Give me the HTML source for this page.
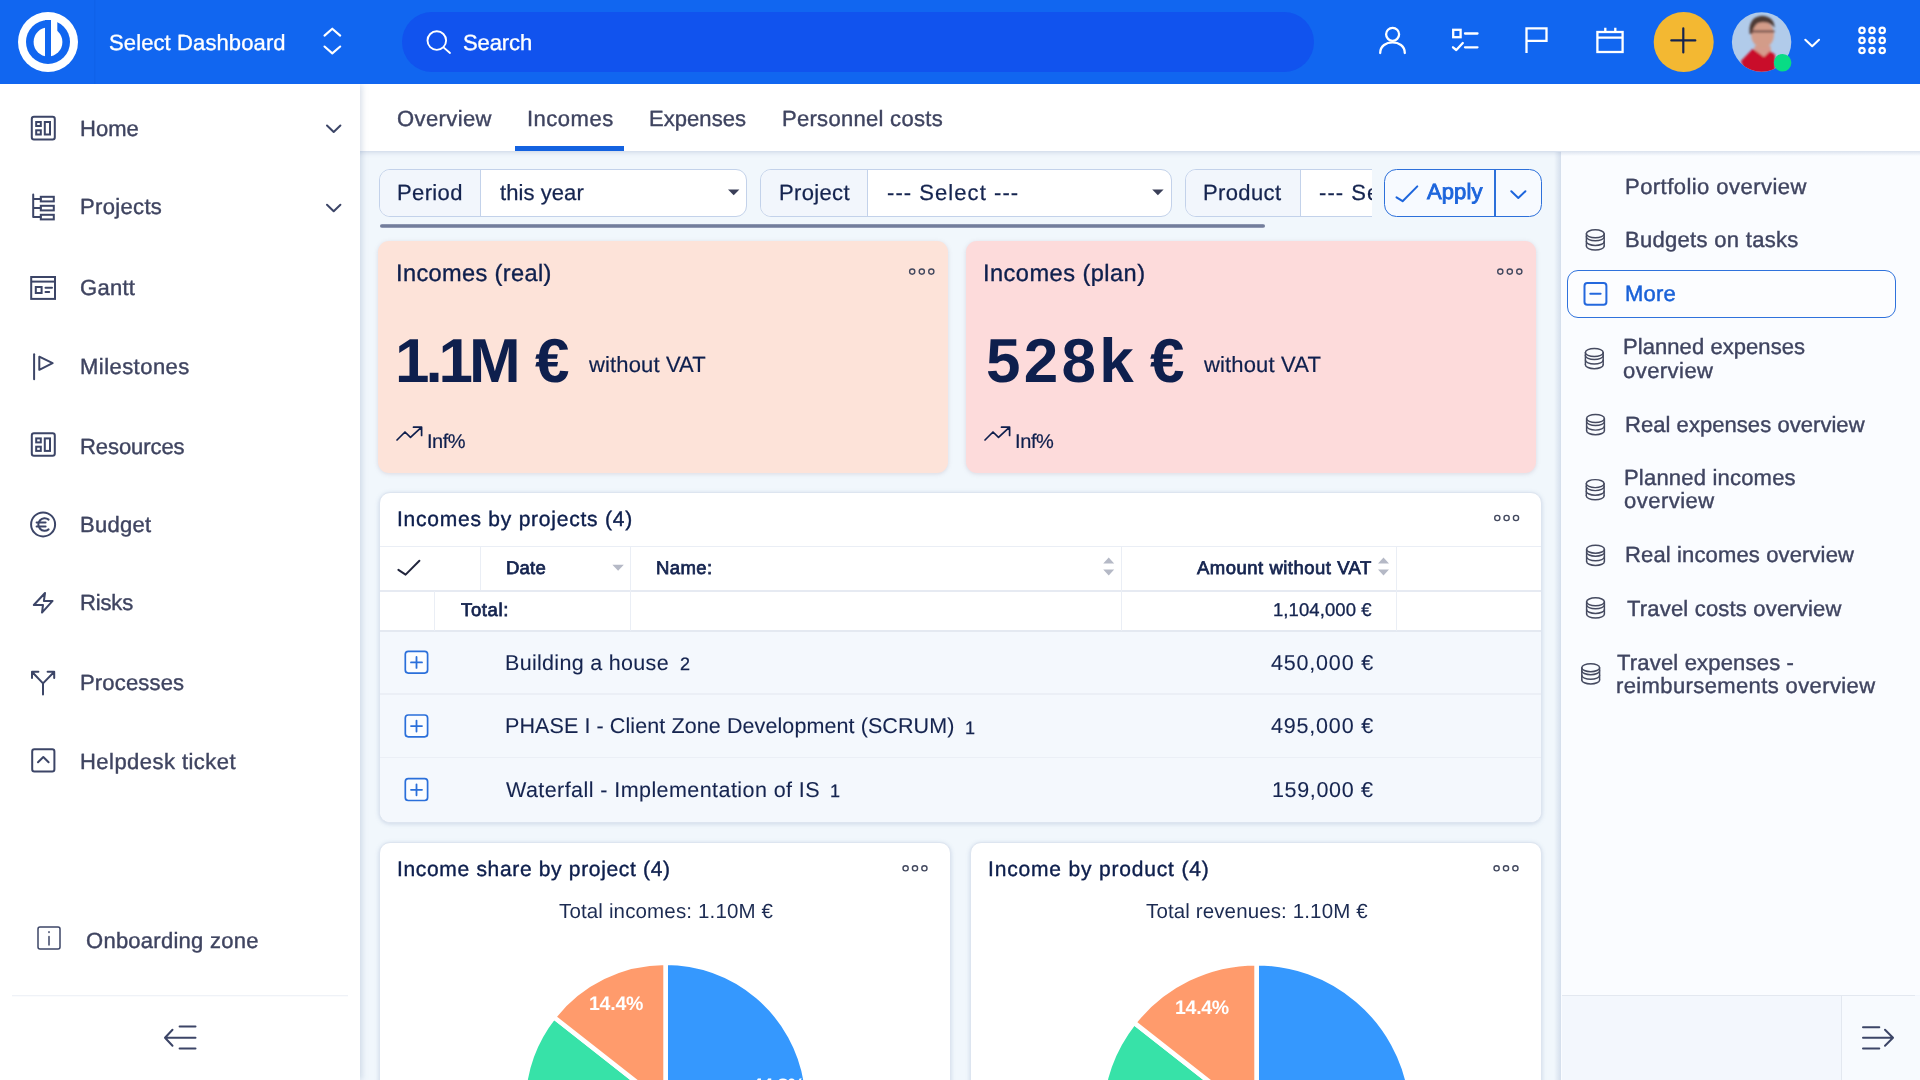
<!DOCTYPE html>
<html>
<head>
<meta charset="utf-8">
<title>Budget dashboard</title>
<style>
*{box-sizing:border-box;margin:0;padding:0}
html,body{width:1920px;height:1080px;overflow:hidden;background:#f1f7fc;font-family:"Liberation Sans",sans-serif;color:#3c4567}
.t{position:absolute;white-space:nowrap;line-height:1;text-rendering:geometricPrecision;will-change:transform}
.b{position:absolute}
#hdr{position:absolute;left:0;top:0;width:1920px;height:84px;background:#1166f0}
#search{position:absolute;left:402px;top:12px;width:912px;height:60px;border-radius:30px;background:#1153ee}
#side{position:absolute;left:0;top:84px;width:359.5px;height:996px;background:#fff;box-shadow:2px 0 6px rgba(110,135,175,.26)}
#tabs{position:absolute;left:355px;top:84px;width:1565px;height:66.8px;background:#fff;box-shadow:0 1px 5px rgba(110,135,180,.32)}
#rpanel{position:absolute;left:1561px;top:151px;width:359px;height:929px;background:#fafcff}
#rpsh{position:absolute;left:1554px;top:152px;width:7px;height:928px;background:linear-gradient(90deg,rgba(110,135,180,0),rgba(110,135,180,.22))}
.wcard{position:absolute;border-radius:11px;background:#fff;border:1px solid #dde5f0;box-shadow:0 1px 4px rgba(110,135,180,.28);overflow:hidden}
.fgrp{position:absolute;top:169.3px;height:47.3px;border:1px solid #c3d2ea;border-radius:11px;background:#fff;overflow:hidden}
.flab{position:absolute;left:0;top:0;height:45.3px;background:#f2f6fc;border-right:1px solid #c3d2ea}
svg{position:absolute;overflow:visible}
</style>
</head>
<body>
<div id="tabs"></div>
<div class="b" style="left:514.8px;top:146.2px;width:109.2px;height:4.8px;background:#1462e0"></div>
<!-- filters -->
<div class="fgrp" style="left:378.5px;width:368.5px"><div class="flab" style="width:101px"></div></div>
<div class="fgrp" style="left:760px;width:412px"><div class="flab" style="width:106.5px"></div></div>
<div class="b" style="left:1184.5px;top:169.3px;width:187.5px;height:47.3px;overflow:hidden"><div class="fgrp" style="left:0;top:0;width:300px"><div class="flab" style="width:115.5px"></div></div></div>
<div class="b" style="left:1383.5px;top:169.3px;width:158px;height:47.4px;border:1.8px solid #2d70da;border-radius:12.5px;background:#f7faff"></div>
<div class="b" style="left:1494px;top:170px;width:2.2px;height:46px;background:#2d70da"></div>
<div class="b" style="left:379.5px;top:224px;width:885px;height:4.2px;border-radius:2px;background:linear-gradient(180deg,#97a0ba,#6c7795 45%,#707b99 60%,#a0a8c0)"></div>
<svg style="left:0;top:0" width="1920" height="260" viewBox="0 0 1920 260">
 <path d="M728 189.6 H739.4 L733.7 195.2 Z" fill="#3a3f58"/>
 <path d="M1152.2 189.6 H1163.6 L1157.9 195.2 Z" fill="#3a3f58"/>
 <g fill="none" stroke="#1d65dc" stroke-width="2" stroke-linecap="round" stroke-linejoin="round">
  <path d="M1396.5 197.3 L1402.6 201.2 L1417.3 186.4"/>
  <path d="M1511.3 191.3 L1518.3 197.9 L1525.4 191.3"/>
 </g>
</svg>
<!-- KPI cards -->
<div class="b" style="left:378.3px;top:240.7px;width:570px;height:232.8px;border-radius:11px;background:#fde3d9;box-shadow:0 1px 4px rgba(150,130,150,.25)"></div>
<div class="b" style="left:965.9px;top:240.7px;width:570.3px;height:232.8px;border-radius:11px;background:#fddbdb;box-shadow:0 1px 4px rgba(150,130,150,.25)"></div>
<svg style="left:0;top:230px" width="1920" height="260" viewBox="0 230 1920 260">
 <g fill="none" stroke="#43495f" stroke-width="1.4">
  <circle cx="912.2" cy="271.6" r="2.6"/><circle cx="921.8" cy="271.6" r="2.6"/><circle cx="931.3" cy="271.6" r="2.6"/>
  <circle cx="1500.3" cy="271.6" r="2.6"/><circle cx="1509.8" cy="271.6" r="2.6"/><circle cx="1519.3" cy="271.6" r="2.6"/>
 </g>
 <g fill="none" stroke="#0e1f4d" stroke-width="1.7" stroke-linecap="round" stroke-linejoin="round">
  <path d="M397 440 L405 432 L410.5 437.3 L421 427.6 M413.5 427.2 H421.6 V435.4"/>
  <path d="M985 440 L993 432 L998.5 437.3 L1009 427.6 M1001.5 427.2 H1009.6 V435.4"/>
 </g>
</svg>
<div class="wcard" style="left:378.8px;top:492.3px;width:1163px;height:330.4px">
 <div class="b" style="left:0;top:138px;width:1163px;height:192px;background:#f4f8fd"></div>
 <div class="b" style="left:0;top:52.5px;width:1163px;height:1.2px;background:#eaeef5"></div>
 <div class="b" style="left:0;top:96.6px;width:1163px;height:2px;background:#e6eaf2"></div>
 <div class="b" style="left:0;top:137.2px;width:1163px;height:1.3px;background:#e4e9f1"></div>
 <div class="b" style="left:0;top:200.2px;width:1163px;height:1.2px;background:#ebeff6"></div>
 <div class="b" style="left:0;top:264px;width:1163px;height:1.2px;background:#ebeff6"></div>
 <div class="b" style="left:100.2px;top:53px;width:1.2px;height:44px;background:#eaeef5"></div>
 <div class="b" style="left:250.2px;top:53px;width:1.2px;height:85px;background:#eaeef5"></div>
 <div class="b" style="left:741.5px;top:53px;width:1.2px;height:85px;background:#eaeef5"></div>
 <div class="b" style="left:1016px;top:53px;width:1.2px;height:85px;background:#eaeef5"></div>
 <div class="b" style="left:54.4px;top:98px;width:1.2px;height:40px;background:#eaeef5"></div>
</div>
<svg style="left:0;top:490px" width="1920" height="340" viewBox="0 490 1920 340">
 <g fill="none" stroke="#43495f" stroke-width="1.4">
  <circle cx="1497.3" cy="518" r="2.6"/><circle cx="1506.6" cy="518" r="2.6"/><circle cx="1516" cy="518" r="2.6"/>
 </g>
 <path d="M398.4 569.8 L405.6 574.6 L419.4 560.8" fill="none" stroke="#22263d" stroke-width="2" stroke-linecap="round" stroke-linejoin="round"/>
 <g fill="#b5b9c6">
  <path d="M612.4 564.8 H623.8 L618.1 570.8 Z"/>
  <path d="M1103.2 563.4 H1114.2 L1108.7 557.4 Z M1103.2 569.4 H1114.2 L1108.7 575.6 Z"/>
  <path d="M1378 563.4 H1389 L1383.5 557.4 Z M1378 569.4 H1389 L1383.5 575.6 Z"/>
 </g>
 <g fill="#fbfdff" stroke="#2a6fda" stroke-width="1.7">
  <rect x="405.3" y="651.3" width="22.3" height="21.8" rx="3"/>
  <rect x="405.3" y="715" width="22.3" height="21.8" rx="3"/>
  <rect x="405.3" y="778.7" width="22.3" height="21.8" rx="3"/>
 </g>
 <g fill="none" stroke="#2a6fda" stroke-width="1.8" stroke-linecap="round">
  <path d="M411 662.4 H422 M416.5 656.9 V667.9"/>
  <path d="M411 726.1 H422 M416.5 720.6 V731.6"/>
  <path d="M411 789.8 H422 M416.5 784.3 V795.3"/>
 </g>
</svg>
<div class="wcard" style="left:378.8px;top:841.8px;width:572.5px;height:260px"></div>
<div class="wcard" style="left:970.3px;top:841.8px;width:571.5px;height:260px"></div>
<svg style="left:0;top:840px" width="1920" height="240" viewBox="0 840 1920 240">
 <g fill="none" stroke="#43495f" stroke-width="1.4">
  <circle cx="905.6" cy="868.3" r="2.6"/><circle cx="915" cy="868.3" r="2.6"/><circle cx="924.4" cy="868.3" r="2.6"/>
  <circle cx="1496.6" cy="868.3" r="2.6"/><circle cx="1506" cy="868.3" r="2.6"/><circle cx="1515.4" cy="868.3" r="2.6"/>
 </g>
 <g>
  <path d="M665.6 1104.9 L665.60 962.70 A142.2 142.2 0 0 1 710.93 1239.68 Z" fill="#3598fe" stroke="#fff" stroke-width="4.6" stroke-linejoin="round"/>
  <path d="M665.6 1104.9 L710.93 1239.68 A142.2 142.2 0 0 1 553.78 1017.06 Z" fill="#37e2a8" stroke="#fff" stroke-width="4.6" stroke-linejoin="round"/>
  <path d="M665.6 1104.9 L553.78 1017.06 A142.2 142.2 0 0 1 665.60 962.70 Z" fill="#ff9b6c" stroke="#fff" stroke-width="4.6" stroke-linejoin="round"/>
 </g>
 <g>
  <path d="M1256.6 1118.9 L1256.60 963.10 A155.8 155.8 0 0 1 1306.26 1266.57 Z" fill="#3598fe" stroke="#fff" stroke-width="4.6" stroke-linejoin="round"/>
  <path d="M1256.6 1118.9 L1306.26 1266.57 A155.8 155.8 0 0 1 1134.08 1022.65 Z" fill="#37e2a8" stroke="#fff" stroke-width="4.6" stroke-linejoin="round"/>
  <path d="M1256.6 1118.9 L1134.08 1022.65 A155.8 155.8 0 0 1 1256.60 963.10 Z" fill="#ff9b6c" stroke="#fff" stroke-width="4.6" stroke-linejoin="round"/>
 </g>
</svg>
<div id="rpanel"></div><div id="rpsh"></div><div class="b" style="left:1561px;top:151px;width:359px;height:5px;background:linear-gradient(180deg,rgba(110,135,180,.22),rgba(110,135,180,0))"></div>
<div class="b" style="left:1562px;top:995.3px;width:358px;height:85px;background:#f3f7fd"></div>
<div class="b" style="left:1842px;top:996px;width:78px;height:84px;background:#f7fafe"></div>
<div class="b" style="left:1562px;top:995px;width:353px;height:1.2px;background:#e3e8f0"></div>
<div class="b" style="left:1841px;top:995px;width:1.2px;height:85px;background:#e3e8f0"></div>
<div class="b" style="left:1567.1px;top:270.2px;width:328.8px;height:47.5px;border:1.9px solid #2f72dc;border-radius:11px;background:#fcfdff"></div>
<svg style="left:1560px;top:150px" width="360" height="930" viewBox="1560 150 360 930">
 <g fill="none" stroke="#454a60" stroke-width="1.45" stroke-linecap="round">
  <ellipse cx="1595.3" cy="233.8" rx="8.9" ry="4.0"/><path d="M1586.3999999999999 236.8 A8.9 4.0 0 0 0 1604.2 236.8"/><path d="M1586.3999999999999 241.4 A8.9 4.0 0 0 0 1604.2 241.4"/><path d="M1586.3999999999999 246.0 A8.9 4.0 0 0 0 1604.2 246.0"/><path d="M1586.3999999999999 233.8 V246.0 M1604.2 233.8 V246.0" />
  <ellipse cx="1594.3" cy="352.5" rx="8.9" ry="4.0"/><path d="M1585.3999999999999 355.5 A8.9 4.0 0 0 0 1603.2 355.5"/><path d="M1585.3999999999999 360.1 A8.9 4.0 0 0 0 1603.2 360.1"/><path d="M1585.3999999999999 364.7 A8.9 4.0 0 0 0 1603.2 364.7"/><path d="M1585.3999999999999 352.5 V364.7 M1603.2 352.5 V364.7" />
  <ellipse cx="1595.5" cy="418.5" rx="8.9" ry="4.0"/><path d="M1586.6 421.5 A8.9 4.0 0 0 0 1604.4 421.5"/><path d="M1586.6 426.1 A8.9 4.0 0 0 0 1604.4 426.1"/><path d="M1586.6 430.7 A8.9 4.0 0 0 0 1604.4 430.7"/><path d="M1586.6 418.5 V430.7 M1604.4 418.5 V430.7" />
  <ellipse cx="1595.2" cy="483.6" rx="8.9" ry="4.0"/><path d="M1586.3 486.6 A8.9 4.0 0 0 0 1604.1000000000001 486.6"/><path d="M1586.3 491.2 A8.9 4.0 0 0 0 1604.1000000000001 491.2"/><path d="M1586.3 495.8 A8.9 4.0 0 0 0 1604.1000000000001 495.8"/><path d="M1586.3 483.6 V495.8 M1604.1000000000001 483.6 V495.8" />
  <ellipse cx="1595.5" cy="549.2" rx="8.9" ry="4.0"/><path d="M1586.6 552.2 A8.9 4.0 0 0 0 1604.4 552.2"/><path d="M1586.6 556.8 A8.9 4.0 0 0 0 1604.4 556.8"/><path d="M1586.6 561.4 A8.9 4.0 0 0 0 1604.4 561.4"/><path d="M1586.6 549.2 V561.4 M1604.4 549.2 V561.4" />
  <ellipse cx="1595.5" cy="601.8" rx="8.9" ry="4.0"/><path d="M1586.6 604.8 A8.9 4.0 0 0 0 1604.4 604.8"/><path d="M1586.6 609.4 A8.9 4.0 0 0 0 1604.4 609.4"/><path d="M1586.6 614.0 A8.9 4.0 0 0 0 1604.4 614.0"/><path d="M1586.6 601.8 V614.0 M1604.4 601.8 V614.0" />
  <ellipse cx="1590.7" cy="667.7" rx="8.9" ry="4.0"/><path d="M1581.8 670.7 A8.9 4.0 0 0 0 1599.6000000000001 670.7"/><path d="M1581.8 675.3 A8.9 4.0 0 0 0 1599.6000000000001 675.3"/><path d="M1581.8 679.9 A8.9 4.0 0 0 0 1599.6000000000001 679.9"/><path d="M1581.8 667.7 V679.9 M1599.6000000000001 667.7 V679.9" />
 </g>
 <g fill="none" stroke="#2468dd" stroke-width="2" stroke-linecap="round">
  <rect x="1584.5" y="283.1" width="21.9" height="21.6" rx="2.8"/>
  <path d="M1590.3 293.8 H1600.6"/>
 </g>
 <path d="M1863 1027.3 H1879.3 M1863 1037.8 H1892.6 M1863 1048.6 H1879.3 M1885 1029.8 L1893 1037.8 L1885 1045.8" fill="none" stroke="#3c4567" stroke-width="2" stroke-linecap="round" stroke-linejoin="round"/>
</svg>
<div id="side"></div>
<svg id="sideicons" style="left:0;top:84px" width="360" height="996" viewBox="0 84 360 996">
 <g fill="none" stroke="#3c4567" stroke-width="2" stroke-linecap="round" stroke-linejoin="round">
  <!-- home -->
  <rect x="31.8" y="116.8" width="23" height="22.6" rx="2.2"/>
  <rect x="36.2" y="122" width="4.6" height="4" stroke-linejoin="miter"/>
  <rect x="36.2" y="130.3" width="4.6" height="4.2" stroke-linejoin="miter"/>
  <rect x="44.8" y="122" width="5.2" height="12.5" stroke-linejoin="miter"/>
  <path d="M327 125.5 L333.7 132 L340.4 125.5"/>
  <!-- projects -->
  <path d="M33.2 194.6 V217 H40.8 M33.2 199 H40.8 M33.2 208 H40.8"/>
  <rect x="40.8" y="196.8" width="13" height="4.6" stroke-linejoin="miter"/>
  <rect x="40.8" y="205.8" width="13" height="4.6" stroke-linejoin="miter"/>
  <rect x="40.8" y="214.8" width="13" height="4.6" stroke-linejoin="miter"/>
  <path d="M327 204.8 L333.7 211.3 L340.4 204.8"/>
  <!-- gantt -->
  <rect x="31.2" y="277" width="23.8" height="21.9" stroke-linejoin="miter"/>
  <path d="M31.2 281.6 H55" stroke-linecap="butt"/>
  <rect x="35.8" y="287" width="5.8" height="6" stroke-linejoin="miter"/>
  <path d="M45.5 287.7 H52 M45.5 292 H49.2"/>
  <!-- milestones -->
  <path d="M34.1 354.2 V379.2"/>
  <path d="M39.3 356.7 L52.6 363.2 L39.3 369.8 Z"/>
  <!-- resources -->
  <rect x="31.8" y="433.2" width="23" height="22.6" rx="2.2"/>
  <rect x="36.2" y="438.4" width="4.6" height="4" stroke-linejoin="miter"/>
  <rect x="36.2" y="446.7" width="4.6" height="4.2" stroke-linejoin="miter"/>
  <rect x="44.8" y="438.4" width="5.2" height="12.5" stroke-linejoin="miter"/>
  <!-- budget -->
  <circle cx="43.1" cy="524.4" r="12"/>
  <path d="M48.6 519.6 A6.3 6.3 0 1 0 48.6 529.4 M36.6 522.6 H45.6 M36.6 526.4 H45.6"/>
  <!-- risks -->
  <path d="M45 593 L33.8 605 H43 L42 612.6 L52.6 600.9 H43.9 Z"/>
  <!-- processes -->
  <path d="M43 694.6 V683.4 L32.4 672.2 M43 683.4 L53.8 672.2 M32 678 V671.8 H38.4 M47.6 671.8 H54.2 V678"/>
  <!-- helpdesk -->
  <rect x="32.2" y="749.2" width="22.2" height="22.2" rx="2.2"/>
  <path d="M38 762.2 L43.3 757 L48.6 762.2"/>
  <!-- collapse -->
  <path d="M179.6 1026.5 H195.5 M165.2 1037.7 H195.5 M179.6 1048.5 H195.5 M172.5 1029.7 L165 1037.7 L172.5 1045.7" stroke-width="2"/>
 </g>
 <g fill="none" stroke="#3c4567" stroke-width="1.5" stroke-linecap="round">
  <rect x="38" y="927" width="22" height="22" rx="2"/>
  <path d="M49 936.6 V945 M49 931.8 V932.4"/>
 </g>
 <rect x="12" y="995" width="336" height="1.3" fill="#eff2f7"/>
</svg>
<div id="hdr">
<svg style="left:0;top:0" width="400" height="84" viewBox="0 0 400 84">
 <rect x="94" y="0" width="1.5" height="84" fill="#0f5fe6" opacity=".55"/>
 <circle cx="48" cy="42" r="30" fill="#fff"/>
 <circle cx="48" cy="42" r="22" fill="#1166f0"/>
 <circle cx="48" cy="42" r="14.4" fill="#fff"/>
 <rect x="45" y="20" width="6" height="37" fill="#1166f0"/>
 <rect x="51" y="15" width="6.3" height="27" fill="#fff"/>
 <path d="M324.5 35.6 L332.3 28.7 L340.2 35.6 M324.5 46.5 L332.3 53.4 L340.2 46.5" fill="none" stroke="#fff" stroke-width="2.1" stroke-linecap="round" stroke-linejoin="round"/>
</svg>
</div>
<div id="search">
<svg style="left:0;top:0" width="140" height="60" viewBox="0 0 140 60">
 <circle cx="34.8" cy="28.6" r="9.3" fill="none" stroke="#fff" stroke-width="1.9"/>
 <path d="M41.8 35.6 L48 41" stroke="#fff" stroke-width="1.9" stroke-linecap="round"/>
</svg>
</div>
<svg id="hicons" style="left:1360px;top:0" width="560" height="84" viewBox="1360 0 560 84">
 <g fill="none" stroke="#fff" stroke-width="2.3" stroke-linecap="round" stroke-linejoin="round">
  <circle cx="1392.6" cy="34.3" r="6.5"/>
  <path d="M1380.2 53 C1380.2 38.8 1404.8 38.8 1404.8 53"/>
  <rect x="1453.2" y="29.8" width="7.4" height="7.4" stroke-linejoin="miter"/>
  <path d="M1465 33.5 H1477.5 M1465 47.3 H1477.5 M1453 47.3 L1456.3 50 L1462.8 43"/>
  <path d="M1526.5 53 V28.3 H1546.5 V40.8 H1526.5" stroke-linejoin="miter" stroke-linecap="butt"/>
  <rect x="1597.4" y="32" width="25.2" height="20" stroke-linejoin="miter"/>
  <path d="M1597.4 37.6 H1622.6 M1605.3 27.8 V32 M1615.3 27.8 V32" stroke-linecap="butt"/>
  <path d="M1805.3 39.8 L1812.2 46.2 L1819 39.8" stroke-width="2.1"/>
 </g>
 <circle cx="1683.7" cy="42" r="30" fill="#f3b832"/>
 <path d="M1671.3 40.4 H1695.3 M1683.3 28.4 V52.4" stroke="#14234f" stroke-width="2.2" stroke-linecap="round"/>
 <defs><clipPath id="avc"><circle cx="1761.6" cy="42" r="29.7"/></clipPath>
 <filter id="bl"><feGaussianBlur stdDeviation="1.1"/></filter></defs>
 <g clip-path="url(#avc)">
  <rect x="1730" y="10" width="64" height="64" fill="#b1cbea"/>
  <g filter="url(#bl)">
   <path d="M1754 56 L1754.5 46 H1770.5 L1771 52 L1764 58 Z" fill="#d59a8c"/>
   <path d="M1752.7 48.7 L1741 61 L1743 68 L1760 76 L1775 72 L1775 54.5 L1770 51.3 L1764 57 Z" fill="#c90c2c"/>
   <ellipse cx="1762.6" cy="34.5" rx="11.4" ry="13.4" fill="#d39c89"/>
   <path d="M1749.6 34 Q1748 17.5 1761.5 15.8 Q1774.5 16.5 1774.6 28 Q1770 21.5 1762 22.2 Q1753.5 22.5 1752.2 34 Z" fill="#4d3b36"/>
   <path d="M1750.5 31.4 H1774.6" stroke="#6b4a44" stroke-width="2"/>
  </g>
 </g>
 <circle cx="1782.6" cy="62.8" r="8.8" fill="#08dc85"/>
 <g fill="none" stroke="#fff" stroke-width="2.2">
  <circle cx="1862" cy="30.4" r="2.7"/><circle cx="1872" cy="30.4" r="2.7"/><circle cx="1882.2" cy="30.4" r="2.7"/>
  <circle cx="1862" cy="40.4" r="2.7"/><circle cx="1872" cy="40.4" r="2.7"/><circle cx="1882.2" cy="40.4" r="2.7"/>
  <circle cx="1862" cy="50.5" r="2.7"/><circle cx="1872" cy="50.5" r="2.7"/><circle cx="1882.2" cy="50.5" r="2.7"/>
 </g>
</svg>

<div class="t" style="left:109.30px;top:32.00px;font-size:22px;color:#fff;-webkit-text-stroke:0.35px #fff;letter-spacing:0.113px;">Select Dashboard</div>
<div class="t" style="left:463.20px;top:32.00px;font-size:22px;color:#fff;-webkit-text-stroke:0.35px #fff;letter-spacing:-0.100px;">Search</div>
<div class="t" style="left:80.10px;top:118.00px;font-size:22px;color:#3f4460;-webkit-text-stroke:0.4px #3f4460;letter-spacing:0.033px;">Home</div>
<div class="t" style="left:80.10px;top:196.00px;font-size:22px;color:#3f4460;-webkit-text-stroke:0.4px #3f4460;letter-spacing:0.343px;">Projects</div>
<div class="t" style="left:80.10px;top:277.00px;font-size:22px;color:#3f4460;-webkit-text-stroke:0.4px #3f4460;letter-spacing:0.275px;">Gantt</div>
<div class="t" style="left:80.10px;top:356.00px;font-size:22px;color:#3f4460;-webkit-text-stroke:0.4px #3f4460;letter-spacing:0.456px;">Milestones</div>
<div class="t" style="left:80.10px;top:436.00px;font-size:22px;color:#3f4460;-webkit-text-stroke:0.4px #3f4460;letter-spacing:-0.075px;">Resources</div>
<div class="t" style="left:80.10px;top:514.00px;font-size:22px;color:#3f4460;-webkit-text-stroke:0.4px #3f4460;letter-spacing:0.280px;">Budget</div>
<div class="t" style="left:80.10px;top:592.00px;font-size:22px;color:#3f4460;-webkit-text-stroke:0.4px #3f4460;letter-spacing:-0.150px;">Risks</div>
<div class="t" style="left:80.10px;top:672.00px;font-size:22px;color:#3f4460;-webkit-text-stroke:0.4px #3f4460;letter-spacing:0.175px;">Processes</div>
<div class="t" style="left:80.10px;top:751.00px;font-size:22px;color:#3f4460;-webkit-text-stroke:0.4px #3f4460;letter-spacing:0.457px;">Helpdesk ticket</div>
<div class="t" style="left:85.70px;top:930.00px;font-size:22px;color:#3f4460;-webkit-text-stroke:0.4px #3f4460;letter-spacing:0.264px;">Onboarding zone</div>
<div class="t" style="left:396.60px;top:108.00px;font-size:22px;color:#3f4460;-webkit-text-stroke:0.4px #3f4460;letter-spacing:0.400px;">Overview</div>
<div class="t" style="left:526.70px;top:108.00px;font-size:22px;color:#3f4460;-webkit-text-stroke:0.4px #3f4460;letter-spacing:0.500px;">Incomes</div>
<div class="t" style="left:649.30px;top:108.00px;font-size:22px;color:#3f4460;-webkit-text-stroke:0.4px #3f4460;letter-spacing:0.057px;">Expenses</div>
<div class="t" style="left:782.30px;top:108.00px;font-size:22px;color:#3f4460;-webkit-text-stroke:0.4px #3f4460;letter-spacing:0.293px;">Personnel costs</div>
<div class="t" style="left:396.90px;top:182.00px;font-size:22px;color:#15244f;-webkit-text-stroke:0.25px #15244f;letter-spacing:0.360px;">Period</div>
<div class="t" style="left:499.60px;top:182.00px;font-size:22px;color:#15244f;-webkit-text-stroke:0.25px #15244f;letter-spacing:0.075px;">this year</div>
<div class="t" style="left:778.90px;top:182.00px;font-size:22px;color:#15244f;-webkit-text-stroke:0.25px #15244f;letter-spacing:0.350px;">Project</div>
<div class="t" style="left:886.60px;top:182.00px;font-size:22px;color:#15244f;-webkit-text-stroke:0.25px #15244f;letter-spacing:1.062px;">--- Select ---</div>
<div class="t" style="left:1203.30px;top:182.00px;font-size:22px;color:#15244f;-webkit-text-stroke:0.25px #15244f;letter-spacing:0.367px;">Product</div>
<div class="b" style="left:1317px;top:178.00px;width:55.00px;height:32px;overflow:hidden"><div class="t" style="left:2.30px;top:4.00px;font-size:22px;color:#15244f;-webkit-text-stroke:0.25px #15244f;letter-spacing:1.062px;">--- Select ---</div></div>
<div class="t" style="left:1427.10px;top:181.00px;font-size:22px;color:#1d65dc;-webkit-text-stroke:0.9px #1d65dc;letter-spacing:0.100px;">Apply</div>
<div class="t" style="left:395.60px;top:263.00px;font-size:23.6px;color:#0e1f4d;-webkit-text-stroke:0.35px #0e1f4d;letter-spacing:0.354px;">Incomes (real)</div>
<div class="t" style="left:395.20px;top:331.00px;font-size:62px;color:#0e1f4d;font-weight:700;letter-spacing:-4.100px;">1.1M</div>
<div class="t" style="left:535.30px;top:331.00px;font-size:62px;color:#0e1f4d;font-weight:700;">€</div>
<div class="t" style="left:588.60px;top:354.00px;font-size:22px;color:#0e1f4d;-webkit-text-stroke:0.2px #0e1f4d;letter-spacing:0.140px;">without VAT</div>
<div class="t" style="left:427.20px;top:432.00px;font-size:20px;color:#0e1f4d;-webkit-text-stroke:0.2px #0e1f4d;letter-spacing:-0.500px;">Inf%</div>
<div class="t" style="left:983.20px;top:263.00px;font-size:23.6px;color:#0e1f4d;-webkit-text-stroke:0.35px #0e1f4d;letter-spacing:0.462px;">Incomes (plan)</div>
<div class="t" style="left:986.20px;top:331.00px;font-size:62px;color:#0e1f4d;font-weight:700;letter-spacing:3.300px;">528k</div>
<div class="t" style="left:1149.70px;top:331.00px;font-size:62px;color:#0e1f4d;font-weight:700;">€</div>
<div class="t" style="left:1204.20px;top:354.00px;font-size:22px;color:#0e1f4d;-webkit-text-stroke:0.2px #0e1f4d;letter-spacing:0.150px;">without VAT</div>
<div class="t" style="left:1014.90px;top:432.00px;font-size:20px;color:#0e1f4d;-webkit-text-stroke:0.2px #0e1f4d;letter-spacing:-0.400px;">Inf%</div>
<div class="t" style="left:396.80px;top:509.00px;font-size:21px;color:#0e1f4d;-webkit-text-stroke:0.4px #0e1f4d;letter-spacing:0.768px;">Incomes by projects (4)</div>
<div class="t" style="left:505.60px;top:559.00px;font-size:18.5px;color:#15244f;-webkit-text-stroke:0.75px #15244f;letter-spacing:0.200px;">Date</div>
<div class="t" style="left:656.10px;top:559.00px;font-size:18.5px;color:#15244f;-webkit-text-stroke:0.75px #15244f;letter-spacing:0.400px;">Name:</div>
<div class="t" style="left:1196.90px;top:559.00px;font-size:18.5px;color:#15244f;-webkit-text-stroke:0.75px #15244f;letter-spacing:0.500px;">Amount without VAT</div>
<div class="t" style="left:460.70px;top:601.00px;font-size:18.5px;color:#15244f;-webkit-text-stroke:0.75px #15244f;letter-spacing:0.640px;">Total:</div>
<div class="t" style="left:1272.60px;top:601.00px;font-size:18.5px;color:#15244f;-webkit-text-stroke:0.3px #15244f;letter-spacing:0.080px;">1,104,000 €</div>
<div class="t" style="left:505.10px;top:653.00px;font-size:21.5px;color:#15244f;-webkit-text-stroke:0.1px #15244f;letter-spacing:0.307px;">Building a house</div>
<div class="t" style="left:680.30px;top:655.00px;font-size:18px;color:#15244f;-webkit-text-stroke:0.25px #15244f;">2</div>
<div class="t" style="left:504.70px;top:716.00px;font-size:21.5px;color:#15244f;-webkit-text-stroke:0.1px #15244f;letter-spacing:0.093px;">PHASE I - Client Zone Development (SCRUM)</div>
<div class="t" style="left:965.00px;top:719.00px;font-size:18px;color:#15244f;-webkit-text-stroke:0.25px #15244f;">1</div>
<div class="t" style="left:505.70px;top:780.00px;font-size:21.5px;color:#15244f;-webkit-text-stroke:0.1px #15244f;letter-spacing:0.429px;">Waterfall - Implementation of IS</div>
<div class="t" style="left:830.00px;top:782.00px;font-size:18px;color:#15244f;-webkit-text-stroke:0.25px #15244f;">1</div>
<div class="t" style="left:1270.90px;top:653.00px;font-size:21.5px;color:#15244f;-webkit-text-stroke:0.1px #15244f;letter-spacing:0.812px;">450,000 €</div>
<div class="t" style="left:1270.90px;top:716.00px;font-size:21.5px;color:#15244f;-webkit-text-stroke:0.1px #15244f;letter-spacing:0.812px;">495,000 €</div>
<div class="t" style="left:1272.20px;top:780.00px;font-size:21.5px;color:#15244f;-webkit-text-stroke:0.1px #15244f;letter-spacing:0.650px;">159,000 €</div>
<div class="t" style="left:396.60px;top:859.00px;font-size:21px;color:#0e1f4d;-webkit-text-stroke:0.4px #0e1f4d;letter-spacing:0.669px;">Income share by project (4)</div>
<div class="t" style="left:987.90px;top:859.00px;font-size:21px;color:#0e1f4d;-webkit-text-stroke:0.4px #0e1f4d;letter-spacing:0.825px;">Income by product (4)</div>
<div class="t" style="left:558.50px;top:902.00px;font-size:20.5px;color:#1c2b52;letter-spacing:0.152px;">Total incomes: 1.10M €</div>
<div class="t" style="left:1145.90px;top:902.00px;font-size:20.5px;color:#1c2b52;letter-spacing:0.127px;">Total revenues: 1.10M €</div>
<div class="t" style="left:588.80px;top:995.00px;font-size:19.5px;color:#fff;font-weight:700;letter-spacing:-0.225px;">14.4%</div>
<div class="t" style="left:1174.80px;top:999.00px;font-size:19.5px;color:#fff;font-weight:700;letter-spacing:-0.275px;">14.4%</div>
<div class="t" style="left:752.40px;top:1077.00px;font-size:19.5px;color:#fff;font-weight:700;letter-spacing:-0.550px;">44.8%</div>
<div class="t" style="left:1624.70px;top:176.00px;font-size:22px;color:#3f4460;-webkit-text-stroke:0.4px #3f4460;letter-spacing:0.453px;">Portfolio overview</div>
<div class="t" style="left:1624.90px;top:229.00px;font-size:22px;color:#3f4460;-webkit-text-stroke:0.4px #3f4460;letter-spacing:0.300px;">Budgets on tasks</div>
<div class="t" style="left:1624.90px;top:283.00px;font-size:22px;color:#1a62d8;-webkit-text-stroke:0.5px #1a62d8;letter-spacing:0.200px;">More</div>
<div class="t" style="left:1622.70px;top:336.00px;font-size:22px;color:#3f4460;-webkit-text-stroke:0.4px #3f4460;letter-spacing:0.067px;">Planned expenses</div>
<div class="t" style="left:1622.70px;top:360.00px;font-size:22px;color:#3f4460;-webkit-text-stroke:0.4px #3f4460;letter-spacing:0.457px;">overview</div>
<div class="t" style="left:1625.00px;top:414.00px;font-size:22px;color:#3f4460;-webkit-text-stroke:0.4px #3f4460;letter-spacing:0.052px;">Real expenses overview</div>
<div class="t" style="left:1623.60px;top:467.00px;font-size:22px;color:#3f4460;-webkit-text-stroke:0.4px #3f4460;letter-spacing:0.200px;">Planned incomes</div>
<div class="t" style="left:1623.60px;top:490.00px;font-size:22px;color:#3f4460;-webkit-text-stroke:0.4px #3f4460;letter-spacing:0.486px;">overview</div>
<div class="t" style="left:1625.00px;top:544.00px;font-size:22px;color:#3f4460;-webkit-text-stroke:0.4px #3f4460;letter-spacing:0.135px;">Real incomes overview</div>
<div class="t" style="left:1626.70px;top:598.00px;font-size:22px;color:#3f4460;-webkit-text-stroke:0.4px #3f4460;letter-spacing:0.185px;">Travel costs overview</div>
<div class="t" style="left:1616.70px;top:652.00px;font-size:22px;color:#3f4460;-webkit-text-stroke:0.4px #3f4460;letter-spacing:0.181px;">Travel expenses -</div>
<div class="t" style="left:1615.70px;top:675.00px;font-size:22px;color:#3f4460;-webkit-text-stroke:0.4px #3f4460;letter-spacing:0.382px;">reimbursements overview</div>
</body>
</html>
